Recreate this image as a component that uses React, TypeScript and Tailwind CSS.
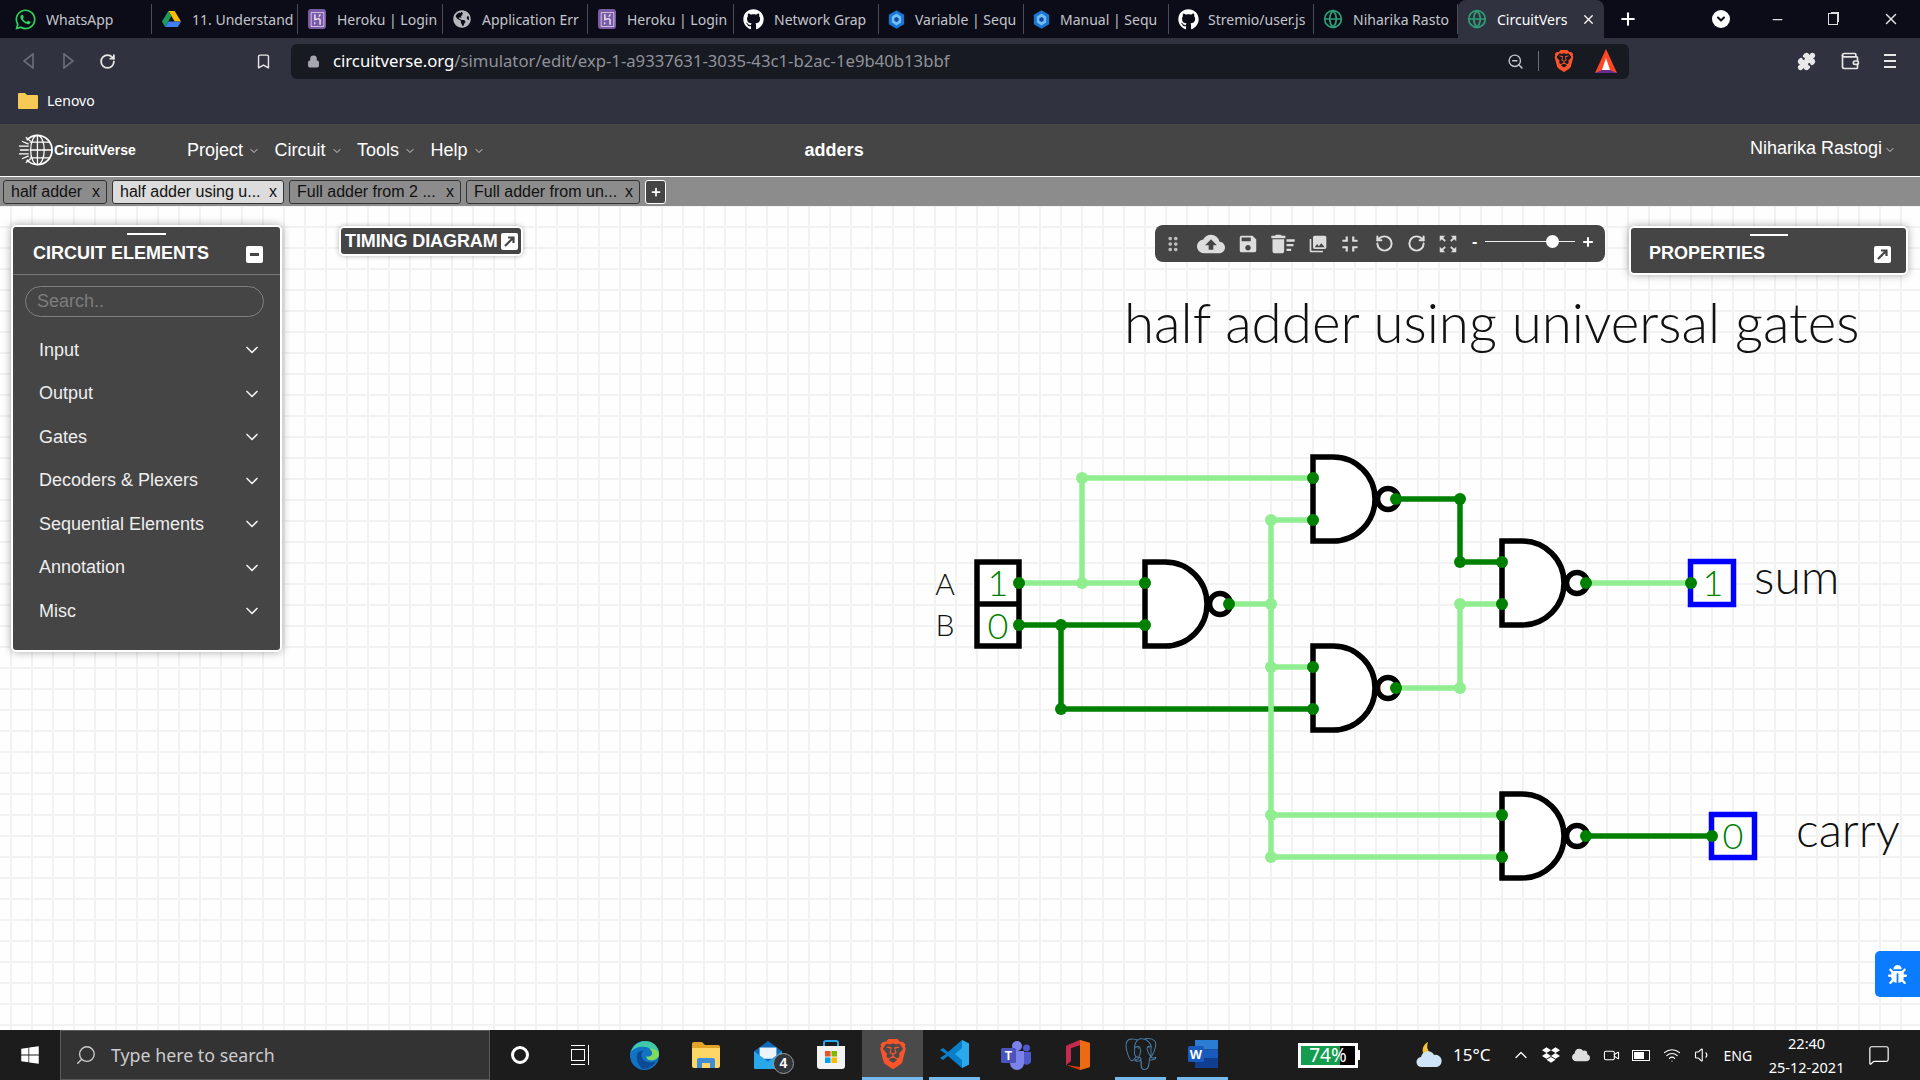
import React from 'react';
import { ChevronDown, Lock, Minus, Plus, Puzzle, RotateCcw, RotateCw, Search, Wallet, X, ZoomOut, Bookmark, Globe, ChevronUp, Wifi, Volume1, MessageSquare, Video } from 'lucide-react';
import { FaBug, FaDropbox, FaGithub, FaGlobeAmericas, FaWhatsapp, FaWindows, FaCloud } from 'react-icons/fa';
import { MdCloudUpload, MdDeleteSweep, MdDragIndicator, MdFullscreenExit, MdPhotoLibrary, MdSave, MdZoomOutMap } from 'react-icons/md';
import { SiBrave, SiHeroku, SiPostgresql } from 'react-icons/si';

const Drive = () => (
    <svg viewBox="0 0 24 22" className="w-[19px] h-[18px]">
        <path d="M8 1h8l8 13h-8z" fill="#fbbc04" />
        <path d="M8 1l-8 13 4 7 8-14z" fill="#1a9c5b" />
        <path d="M4 21h16l4-7H8z" fill="#3f7fee" />
    </svg>
);

const Hex = () => (
    <svg viewBox="0 0 20 24" className="w-[17px] h-[21px]">
        <path d="M10 1l9 5.500v11L10 23l-9-5.500v-11z" fill="#1976d2" />
        <path d="M10 5l5.500 3.500v7L10 19l-5.500-3.500v-7z" fill="#6fbdf2" />
        <path d="M10 9l2.500 1.500v3L10 15l-2.500-1.500v-3z" fill="#0d47a1" />
    </svg>
);

const HerokuTab = () => (
    <span className="w-[18px] h-[20px] rounded-[3px] bg-[#7a5ba6] flex items-center justify-center">
        <SiHeroku size={15} className="text-[#e6e0f0]" />
    </span>
);

const browserTabs = [
    { title: 'WhatsApp', icon: <FaWhatsapp size={23} className="text-[#2fd15f]" />, w: 'w-[152px] pl-[14px]', gap: 'gap-[9px]' },
    { title: '11. Understand', icon: <Drive />, w: 'w-[146px] pl-[10px]', gap: 'gap-[11px]' },
    { title: 'Heroku | Login', icon: <HerokuTab />, w: 'w-[145px] pl-[10px]', gap: 'gap-[11px]' },
    { title: 'Application Err', icon: <FaGlobeAmericas size={18} className="text-[#b5b7bd]" />, w: 'w-[145px] pl-[10px]', gap: 'gap-[11px]' },
    { title: 'Heroku | Login', icon: <HerokuTab />, w: 'w-[146px] pl-[10px]', gap: 'gap-[11px]' },
    { title: 'Network Grap', icon: <FaGithub size={21} className="text-white" />, w: 'w-[145px] pl-[9px]', gap: 'gap-[10px]' },
    { title: 'Variable | Sequ', icon: <Hex />, w: 'w-[145px] pl-[9px]', gap: 'gap-[10px]' },
    { title: 'Manual | Sequ', icon: <Hex />, w: 'w-[145px] pl-[9px]', gap: 'gap-[10px]' },
    { title: 'Stremio/user.js', icon: <FaGithub size={21} className="text-white" />, w: 'w-[145px] pl-[9px]', gap: 'gap-[9px]' },
    { title: 'Niharika Rasto', icon: <Globe size={20} className="text-[#2e9e78]" />, w: 'w-[144px] pl-[9px]', gap: 'gap-[10px]' },
];

const appTabs = [
    { title: 'half adder', w: 'w-[104px]', on: false },
    { title: 'half adder using u...', w: 'w-[172px]', on: true },
    { title: 'Full adder from 2 ...', w: 'w-[172px]', on: false },
    { title: 'Full adder from un...', w: 'w-[174px]', on: false },
];

const menuItems = ['Project', 'Circuit', 'Tools', 'Help'];
const elements = ['Input', 'Output', 'Gates', 'Decoders & Plexers', 'Sequential Elements', 'Annotation', 'Misc'];

const Node = ({ x, y, c = '#008000', r = 6 }: { x: number; y: number; c?: string; r?: number }) => <circle cx={x} cy={y} r={r} fill={c} />;

const Nand = ({ x, y }: { x: number; y: number }) => (
    <g fill="none" stroke="#000" strokeWidth={5.5}>
        <path d={`M${x} ${y - 42}h20a42 42 0 0 1 0 84h-20z`} fill="#fff" />
        <circle cx={x + 75} cy={y} r={10.5} fill="#fff" />
    </g>
);

const LIGHT = '#90ee90';
const DARK = '#008000';

const CircuitDrawing = () => (
    <svg viewBox="0 206 1920 824" className="absolute inset-0 w-[1920px] h-[824px]">
        <text x={1124} y={343} className="font-['Lato'] font-light" fontSize={54.7} fill="#111">half adder using universal gates</text>

        {/* wires */}
        <g fill="none" strokeWidth={5.5}>
            <path stroke={DARK} d="M1019 625H1145M1061 625V709H1313" />
            <path stroke={LIGHT} d="M1019 583H1145M1082 583V478H1313M1229 604H1271M1271 520V857M1271 520H1313M1271 667H1313M1271 815H1502M1271 857H1502" />
            <path stroke={DARK} d="M1396 499H1460V562H1502" />
            <path stroke={LIGHT} d="M1396 688H1460V604H1502M1586 583H1691" />
            <path stroke={DARK} d="M1586 836H1712" />
        </g>

        <Nand x={1145} y={604} />
        <Nand x={1313} y={499} />
        <Nand x={1313} y={688} />
        <Nand x={1502} y={583} />
        <Nand x={1502} y={836} />

        {/* inputs */}
        <rect x={977} y={562} width={42} height={84} fill="#fff" stroke="#000" strokeWidth={5.5} />
        <path d="M977 604H1019" stroke="#000" strokeWidth={5.5} />
        <g className="font-['Lato'] font-light" fontSize={36} fill={DARK} textAnchor="middle">
            <text x={998} y={596}>1</text>
            <text x={998} y={639}>0</text>
        </g>
        <g className="font-['Lato'] font-light" fontSize={30} fill="#111" textAnchor="middle">
            <text x={945} y={595}>A</text>
            <text x={945} y={636}>B</text>
        </g>

        {/* outputs */}
        <rect x={1690.5} y={561.5} width={43} height={43} fill="#fff" stroke="#0000ff" strokeWidth={5.5} />
        <rect x={1711.5} y={814.5} width={43} height={43} fill="#fff" stroke="#0000ff" strokeWidth={5.5} />
        <g className="font-['Lato'] font-light" fontSize={36} fill={DARK} textAnchor="middle">
            <text x={1713} y={596}>1</text>
            <text x={1733} y={849}>0</text>
        </g>
        <g className="font-['Lato'] font-light" fontSize={48} fill="#111">
            <text x={1754} y={594}>sum</text>
            <text x={1796} y={847}>carry</text>
        </g>

        {/* junctions */}
        <Node x={1082} y={583} c={LIGHT} />
        <Node x={1082} y={478} c={LIGHT} />
        <Node x={1061} y={625} c={DARK} />
        <Node x={1061} y={709} c={DARK} />
        <Node x={1271} y={520} c={LIGHT} />
        <Node x={1271} y={604} c={LIGHT} />
        <Node x={1271} y={667} c={LIGHT} />
        <Node x={1271} y={815} c={LIGHT} />
        <Node x={1271} y={857} c={LIGHT} />
        <Node x={1460} y={499} c={DARK} />
        <Node x={1460} y={562} c={DARK} />
        <Node x={1460} y={604} c={LIGHT} />
        <Node x={1460} y={688} c={LIGHT} />

        {/* gate pins */}
        {[[1019, 583], [1019, 625], [1145, 583], [1145, 625], [1229, 604], [1313, 478], [1313, 520], [1396, 499], [1313, 667], [1313, 709], [1396, 688], [1502, 562], [1502, 604], [1586, 583], [1691, 583], [1502, 815], [1502, 857], [1586, 836], [1712, 836]].map(([x, y]) => (
            <Node key={`${x}-${y}`} x={x} y={y} />
        ))}
    </svg>
);

const CvLogo = () => (
    <svg viewBox="0 0 36 36" className="w-[35px] h-[36px]" fill="none" stroke="#fff" strokeWidth={1.3}>
        <path d="M20 3a15 15 0 1 1 0 30" strokeWidth={1.8} />
        <path d="M20 3a15 15 0 0 0-11 5M20 33a15 15 0 0 1-11-5" strokeWidth={1.8} />
        <ellipse cx="20" cy="18" rx="7" ry="15" />
        <path d="M20 3v30M12 10h21M12 18h23M12 26h21" />
        <path d="M1 14h10M2 18h9M1 22h10M4 9l7 3M4 27l7-3M8 5l5 4M8 31l5-4" />
    </svg>
);

const Popout = () => (
    <span className="w-[17px] h-[17px] rounded-[2px] bg-white flex items-center justify-center">
        <svg viewBox="0 0 17 17" className="w-[17px] h-[17px]" fill="none" stroke="#454545" strokeWidth={2.2}>
            <path d="M4 13l8-8M7 4.500h5.500V10" />
        </svg>
    </span>
);

const Edge = () => (
    <svg viewBox="0 0 32 32" className="w-[31px] h-[31px]">
        <circle cx="16" cy="16" r="15" fill="#1273c4" />
        <path d="M2 13C4 4 12 1 17 1c8 0 14 6 14 13 0 5-4 7-8 7-3 0-5-2-5-4 3 1 6-1 6-3 0-4-4-7-9-7-6 0-11 2-13 6z" fill="#3ec9a7" />
        <path d="M31 15c0 3-4 6-8 6-3 0-5-2-5-4 3 1 6-1 6-3 0-2-1-4-3-5 6 0 10 2 10 6z" fill="#7fdb5e" />
        <path d="M8 17c0-4 3-6 7-6-3 2-3 8 2 11 3 2 8 1 11 0-3 5-8 8-13 8-4-2-7-7-7-13z" fill="#0c4a94" />
    </svg>
);

const FilesIcon = () => (
    <svg viewBox="0 0 28 26" className="w-[28px] h-[26px]">
        <path d="M0 2a2 2 0 0 1 2-2h8l3 3h13a2 2 0 0 1 2 2v2H0z" fill="#e0a526" />
        <path d="M0 6h28v18a2 2 0 0 1-2 2H2a2 2 0 0 1-2-2z" fill="#fdd667" />
        <path d="M5 26v-8a2 2 0 0 1 2-2h14a2 2 0 0 1 2 2v8h-5v-5h-8v5z" fill="#3f8fd8" />
    </svg>
);

const MailIcon = () => (
    <span className="relative flex">
        <svg viewBox="0 0 30 30" className="w-[30px] h-[28px]">
            <path d="M15 0l15 11v17a2 2 0 0 1-2 2H2a2 2 0 0 1-2-2V11z" fill="#0f6cbd" />
            <path d="M6 7h18v12H6z" fill="#eef4fb" />
            <path d="M0 11l15 11 15-11v17a2 2 0 0 1-2 2H2a2 2 0 0 1-2-2z" fill="#28a8ea" />
        </svg>
        <span className="absolute -right-[11px] -bottom-[5px] w-[21px] h-[21px] rounded-full bg-[#30353b] border border-[#9a9a9a] text-white text-[14px] leading-[19px] text-center font-['Liberation_Sans'] font-bold">4</span>
    </span>
);

const StoreIcon = () => (
    <svg viewBox="0 0 30 30" className="w-[30px] h-[30px]">
        <path d="M8 7V3a2 2 0 0 1 2-2h10a2 2 0 0 1 2 2v4" fill="none" stroke="#29a8e8" strokeWidth={2} />
        <path d="M1 6h28v20a3 3 0 0 1-3 3H4a3 3 0 0 1-3-3z" fill="#f3f3f3" />
        <rect x="9" y="11" width="5.5" height="5.5" fill="#e8532b" />
        <rect x="15.5" y="11" width="5.5" height="5.5" fill="#7fba00" />
        <rect x="9" y="17.5" width="5.5" height="5.5" fill="#00a4ef" />
        <rect x="15.5" y="17.5" width="5.5" height="5.5" fill="#ffb900" />
    </svg>
);

const VsCode = () => (
    <svg viewBox="0 0 30 30" className="w-[30px] h-[30px]">
        <path d="M22 1l7 3.500v21L22 29 8 17l-5 4-3-2 6-4-6-4 3-2 5 4z" fill="#0a7fc9" />
        <path d="M22 1l7 3.500v21L22 29V21l-7-6 7-6z" fill="#2aa9ee" />
    </svg>
);

const Teams = () => (
    <svg viewBox="0 0 30 30" className="w-[30px] h-[30px]">
        <circle cx="16" cy="6" r="5" fill="#7b83eb" />
        <circle cx="25.5" cy="8" r="3.5" fill="#5059c9" />
        <path d="M21 12h9v10a5 5 0 0 1-7 2z" fill="#5059c9" />
        <path d="M9 11h14v12a7 7 0 0 1-14 0z" fill="#7b83eb" />
        <rect x="0" y="8" width="15" height="15" rx="1.5" fill="#4b53bc" />
        <text x="7.5" y="20" textAnchor="middle" fontSize="12" fontWeight="700" fill="#fff" className="font-['Liberation_Sans']">T</text>
    </svg>
);

const Office = () => (
    <svg viewBox="0 0 24 30" className="w-[24px] h-[30px]">
        <path d="M14 0l10 3v24l-10 3-14-5 14 2V5L5 8v13l-5 4V6z" fill="#d83b01" />
        <path d="M14 0L0 6v19l5-4V8l9-3z" fill="#c42b50" />
        <path d="M14 0l10 3v24l-10 3z" fill="#eb6a12" />
    </svg>
);

const Word = () => (
    <svg viewBox="0 0 30 28" className="w-[30px] h-[28px]">
        <rect x="7" y="0" width="23" height="9.5" fill="#2b7cd3" />
        <rect x="7" y="9.5" width="23" height="9" fill="#185abd" />
        <rect x="7" y="18.5" width="23" height="9.5" fill="#103f91" />
        <rect x="0" y="6" width="16" height="16" rx="1.5" fill="#185abd" />
        <text x="8" y="19" textAnchor="middle" fontSize="13" fontWeight="700" fill="#fff" className="font-['Liberation_Sans']">W</text>
    </svg>
);

const Bat = () => (
    <svg viewBox="0 0 22 24" className="w-[22px] h-[24px]">
        <path d="M11 0l11 24H0z" fill="#ff4724" />
        <path d="M0 24l7-3h8l7 3z" fill="#662d91" />
        <path d="M11 9l4 12H7z" fill="#fff" />
    </svg>
);

const Weather = () => (
    <svg viewBox="0 0 28 28" className="w-[28px] h-[28px]">
        <path d="M13 1c-6 3-7 10-3 14l8-2C13 11 11 7 13 1z" fill="#f5c33b" />
        <path d="M7 26a5 5 0 0 1-1-10 7 7 0 0 1 13-2 6 6 0 0 1 3 12z" fill="#cfe4f6" />
    </svg>
);

export default function App() {
    return (
        <div className="w-[1920px] h-[1080px] overflow-hidden flex flex-col font-['Liberation_Sans',sans-serif] bg-white">
            {/* Browser tabs */}
            <div className="h-[38px] shrink-0 bg-[#0b0c17] flex font-['Noto_Sans',sans-serif] text-[14px]">
                {browserTabs.map((t, i) => (
                    <div key={i} className={`${t.w} ${t.gap} h-[30px] mt-[4px] pr-[2px] flex items-center border-r border-[#4a4c57] overflow-hidden`}>
                        <span className="shrink-0 flex">{t.icon}</span>
                        <span className="whitespace-nowrap text-[#c3c5cc]">{t.title}</span>
                    </div>
                ))}
                <div className="w-[146px] bg-[#30323f] rounded-t-[8px] pl-[9px] pr-[8px] flex items-center gap-[10px]">
                    <Globe size={20} className="text-[#2e9e78] shrink-0" />
                    <span className="whitespace-nowrap text-white flex-1">CircuitVers</span>
                    <X size={15} className="text-white shrink-0" />
                </div>
                <div className="w-[48px] flex items-center justify-center">
                    <Plus size={20} strokeWidth={2.5} className="text-white" />
                </div>
                <div className="flex-1 flex items-center text-white">
                    <span className="ml-[60px] w-[18px] h-[18px] rounded-full bg-white flex items-center justify-center">
                        <ChevronDown size={12} strokeWidth={4} className="text-[#0b0c17]" />
                    </span>
                    <Minus size={15} className="ml-[40px] text-[#ddd]" />
                    <span className="ml-[43px] w-[10px] h-[12px] border border-[#ddd] shadow-[2px_-2px_0_-1px_#ddd]" />
                    <X size={18} className="ml-[44px] text-[#ddd]" />
                </div>
            </div>

            {/* Address bar */}
            <div className="h-[46px] shrink-0 bg-[#30323f] flex items-center">
                <svg viewBox="0 0 12 16" className="ml-[22px] w-[12px] h-[16px]" fill="none" stroke="#6b6e7a" strokeWidth={1.6}><path d="M11 1L2 8l9 7z" /></svg>
                <svg viewBox="0 0 12 16" className="ml-[29px] w-[12px] h-[16px]" fill="none" stroke="#6b6e7a" strokeWidth={1.6}><path d="M1 1l9 7-9 7z" /></svg>
                <RotateCw size={17} strokeWidth={2.5} className="ml-[24px] text-[#e8e8e8]" />
                <Bookmark size={17} strokeWidth={2} className="ml-[139px] text-[#e8e8e8]" />
                <div className="ml-[19px] w-[1338px] h-[35px] rounded-[6px] bg-[#181a21] flex items-center font-['Noto_Sans',sans-serif] text-[16.7px]">
                    <Lock size={13} className="ml-[16px] text-[#a5a7ad] fill-[#a5a7ad]" />
                    <span className="ml-[13px] text-white whitespace-nowrap">circuitverse.org<span className="text-[#8f929b]">/simulator/edit/exp-1-a9337631-3035-43c1-b2ac-1e9b40b13bbf</span></span>
                    <div className="ml-auto flex items-center">
                        <ZoomOut size={17} className="text-[#c3c5cc]" />
                        <span className="ml-[14px] w-px h-[20px] bg-[#6b6e7a]" />
                        <SiBrave size={22} className="ml-[14px] text-[#fb542b]" />
                        <span className="ml-[20px] mr-[12px] flex"><Bat /></span>
                    </div>
                </div>
                <Puzzle size={19} className="ml-[168px] text-[#e8e8e8] fill-[#e8e8e8]" />
                <Wallet size={20} className="ml-[24px] text-[#e8e8e8]" />
                <div className="ml-[24px] flex flex-col gap-[4px]">
                    <span className="w-[12px] h-[2px] bg-[#e8e8e8]" />
                    <span className="w-[12px] h-[2px] bg-[#e8e8e8]" />
                    <span className="w-[12px] h-[2px] bg-[#e8e8e8]" />
                </div>
            </div>

            {/* Bookmarks */}
            <div className="h-[40px] pb-[8px] shrink-0 bg-[#30323f] flex items-center pl-[18px] gap-[9px] font-['Noto_Sans',sans-serif] text-[14px] text-white">
                <svg viewBox="0 0 20 17" className="w-[20px] h-[17px]"><path d="M0 2a1 1 0 0 1 1-1h6l2 2h10a1 1 0 0 1 1 1v12a1 1 0 0 1-1 1H1a1 1 0 0 1-1-1z" fill="#f7ca55" /></svg>
                Lenovo
            </div>

            {/* CircuitVerse navbar */}
            <div className="h-[53px] shrink-0 bg-[#454545] border-b border-white flex items-center text-white text-[18px]">
                <span className="ml-[18px] flex"><CvLogo /></span>
                <span className="ml-[1px] text-[14px] font-bold w-[133px]">CircuitVerse</span>
                {menuItems.map((m, i) => (
                    <span key={m} className={`flex items-center gap-[5px] ${i === 0 ? '' : 'ml-[14.5px]'}`}>
                        {m}
                        <ChevronDown size={12} strokeWidth={1.5} className="mt-[2px]" />
                    </span>
                ))}
                <span className="ml-[320px] font-bold">adders</span>
                <span className="ml-auto mr-[24px] mb-[4px] flex items-center gap-[2px]">
                    Niharika Rastogi
                    <ChevronDown size={12} strokeWidth={1.5} className="mt-[4px]" />
                </span>
            </div>

            {/* Project tabs */}
            <div className="h-[29px] shrink-0 bg-[#8c8c8c] flex items-center pl-[3px] gap-[5px] text-[16px] text-[#111]">
                {appTabs.map(t => (
                    <div key={t.title} className={`${t.w} h-[24px] rounded-[3px] border border-[#333] flex items-center justify-between pl-[7px] pr-[6px] ${t.on ? 'bg-[#dcdcdc]' : 'bg-[#8c8c8c]'}`}>
                        <span className="whitespace-nowrap">{t.title}</span>
                        <span>x</span>
                    </div>
                ))}
                <div className="w-[21px] h-[24px] rounded-[3px] border border-white bg-[#454545] flex items-center justify-center">
                    <Plus size={12} strokeWidth={3.5} className="text-white" />
                </div>
            </div>

            {/* Canvas */}
            <div className="relative flex-1 bg-[#fefefe] bg-[linear-gradient(to_right,#f2f2f2_2px,transparent_2px),linear-gradient(to_bottom,#f2f2f2_2px,transparent_2px)] bg-[size:21px_21px] bg-[position:10px_20px]">
                <CircuitDrawing />

                {/* Circuit elements panel */}
                <div className="absolute left-[11px] top-[19px] w-[271px] h-[427px] rounded-[5px] bg-[#454545] border-2 border-white shadow-[0_0_8px_rgba(0,0,0,0.35)] text-white flex flex-col">
                    <span className="self-center mt-[6px] w-[39px] h-[2px] bg-white" />
                    <div className="h-[40px] border-b border-[#777] flex items-center justify-between pl-[20px] pr-[17px]">
                        <span className="font-bold text-[18px] mb-[2px]">CIRCUIT ELEMENTS</span>
                        <span className="w-[17px] h-[17px] rounded-[2px] bg-white flex items-center justify-center">
                            <span className="w-[9px] h-[3px] bg-[#454545]" />
                        </span>
                    </div>
                    <input placeholder="Search.." className="mx-[12px] mt-[11px] h-[31px] w-[239px] rounded-full border border-[#808080] bg-transparent px-[11px] text-[18px] outline-none placeholder:text-[#7d7d7d]" />
                    <div className="mt-[11.5px] flex flex-col">
                        {elements.map(e => (
                            <div key={e} className="h-[43.5px] flex items-center justify-between pl-[26px] pr-[18px] text-[18px] text-[#eeeeee]">
                                <span>{e}</span>
                                <ChevronDown size={20} strokeWidth={2} />
                            </div>
                        ))}
                    </div>
                </div>

                {/* Timing diagram button */}
                <div className="absolute left-[339px] top-[20px] w-[184px] h-[30px] rounded-[5px] bg-[#454545] border-2 border-white shadow-[0_0_5px_rgba(0,0,0,0.3)] text-white flex items-center justify-between pl-[4px] pr-[3px]">
                    <span className="font-bold text-[18px] whitespace-nowrap tracking-[-0.1px]">TIMING DIAGRAM</span>
                    <Popout />
                </div>

                {/* Toolbar */}
                <div className="absolute left-[1155px] top-[19px] w-[450px] h-[37px] rounded-[8px] bg-[#454545] flex items-center text-[#dddddd]">
                    <MdDragIndicator size={22} className="ml-[7px] text-[#bdbdbd]" />
                    <MdCloudUpload size={28} className="ml-[13px]" />
                    <MdSave size={22} className="ml-[12px]" />
                    <MdDeleteSweep size={28} className="ml-[10px]" />
                    <MdPhotoLibrary size={20} className="ml-[11px]" />
                    <MdFullscreenExit size={26} className="ml-[9px]" />
                    <RotateCcw size={19} strokeWidth={2.5} className="ml-[12px]" />
                    <RotateCw size={19} strokeWidth={2.5} className="ml-[13px]" />
                    <MdZoomOutMap size={22} className="ml-[11px]" />
                    <span className="ml-[13px] mb-[3px] font-bold text-[16px] text-white">-</span>
                    <div className="ml-[8px] mb-[4px] relative w-[90px] h-px bg-[#eeeeee]">
                        <span className="absolute left-[61px] -top-[6px] w-[13px] h-[13px] rounded-full bg-white" />
                    </div>
                    <Plus size={14} strokeWidth={3.5} className="ml-[6px] mb-[4px] text-white" />
                </div>

                {/* Properties */}
                <div className="absolute left-[1629px] top-[20px] w-[279px] h-[49px] rounded-[5px] bg-[#454545] border-2 border-white shadow-[0_0_8px_rgba(0,0,0,0.35)] text-white flex flex-col">
                    <span className="self-center mt-[6px] w-[38px] h-[2px] bg-white" />
                    <div className="flex-1 flex items-center justify-between pl-[18px] pr-[15px]">
                        <span className="font-bold text-[18px] mb-[2px]">PROPERTIES</span>
                        <Popout />
                    </div>
                </div>

                {/* Report bug */}
                <div className="absolute right-0 top-[745px] w-[45px] h-[46px] rounded-l-[5px] bg-[#0b7cff] flex items-center justify-center">
                    <FaBug size={19} className="text-white" />
                </div>
            </div>

            {/* Windows taskbar */}
            <div className="h-[50px] shrink-0 bg-[#1c1c1c] flex items-center text-white">
                <div className="w-[60px] flex justify-center"><FaWindows size={20} /></div>
                <div className="w-[430px] h-[50px] bg-[#333333] border border-[#5a5a5a] flex items-center pl-[14px] gap-[14px] font-['Noto_Sans',sans-serif] text-[17.8px] text-[#cccccc]">
                    <Search size={22} strokeWidth={1.5} className="-scale-x-100" />
                    Type here to search
                </div>
                <div className="w-[60px] flex justify-center"><span className="w-[18px] h-[18px] rounded-full border-[3px] border-white" /></div>
                <div className="w-[60px] flex justify-center">
                    <span className="w-[14px] h-[20px] border-y border-white flex items-center"><span className="w-[14px] h-[12px] border border-white" /></span>
                    <span className="ml-[3px] w-px h-[20px] bg-white" />
                </div>
                <div className="ml-[3px] w-[62px] flex justify-center"><Edge /></div>
                <div className="w-[62px] flex justify-center"><FilesIcon /></div>
                <div className="w-[62px] flex justify-center"><MailIcon /></div>
                <div className="w-[63px] flex justify-center"><StoreIcon /></div>
                <div className="w-[61px] h-[50px] bg-[#4a4a4a] border-b-[3px] border-[#76b9ed] flex items-center justify-center"><SiBrave size={30} className="text-[#fb542b]" /></div>
                <div className="ml-[6px] w-[51px] h-[50px] border-b-[3px] border-[#76b9ed] flex items-center justify-center"><VsCode /></div>
                <div className="ml-[10px] w-[51px] flex justify-center"><Teams /></div>
                <div className="ml-[11px] w-[51px] flex justify-center"><Office /></div>
                <div className="ml-[12px] w-[51px] h-[50px] border-b-[3px] border-[#76b9ed] flex items-center justify-center"><SiPostgresql size={32} className="text-[#4a7fa8]" /></div>
                <div className="ml-[11px] w-[51px] h-[50px] border-b-[3px] border-[#76b9ed] flex items-center justify-center"><Word /></div>

                {/* Battery meter */}
                <div className="ml-[70px] relative w-[60px] h-[25px] border-[3px] border-white bg-black">
                    <div className="h-full bg-[#149c4f] w-[72%]" />
                    <span className="absolute inset-0 text-center text-[19px] leading-[19px] font-['Noto_Sans',sans-serif]">74%</span>
                </div>
                <span className="w-[2px] h-[10px] bg-white" />

                <span className="ml-[55px] flex"><Weather /></span>
                <span className="ml-[10px] text-[17px] font-['Noto_Sans',sans-serif]">15°C</span>
                <ChevronUp size={20} strokeWidth={1.5} className="ml-[21px]" />
                <FaDropbox size={18} className="ml-[11px]" />
                <FaCloud size={18} className="ml-[12px] text-[#dddddd]" />
                <Video size={17} strokeWidth={1.5} className="ml-[13px]" />
                <span className="ml-[12px] w-[18px] h-[11px] border border-white p-[1px]"><span className="block w-[10px] h-full bg-white" /></span>
                <Wifi size={18} strokeWidth={1.5} className="ml-[13px]" />
                <Volume1 size={18} strokeWidth={1.5} className="ml-[13px]" />
                <span className="ml-[11px] text-[14px] font-['Noto_Sans',sans-serif]">ENG</span>
                <div className="ml-[17px] w-[75px] flex flex-col items-center text-[14.5px] leading-[24px] font-['Noto_Sans',sans-serif]">
                    <span>22:40</span>
                    <span className="whitespace-nowrap">25-12-2021</span>
                </div>
                <MessageSquare size={22} strokeWidth={1.3} className="ml-[24px]" />
            </div>
        </div>
    );
}
